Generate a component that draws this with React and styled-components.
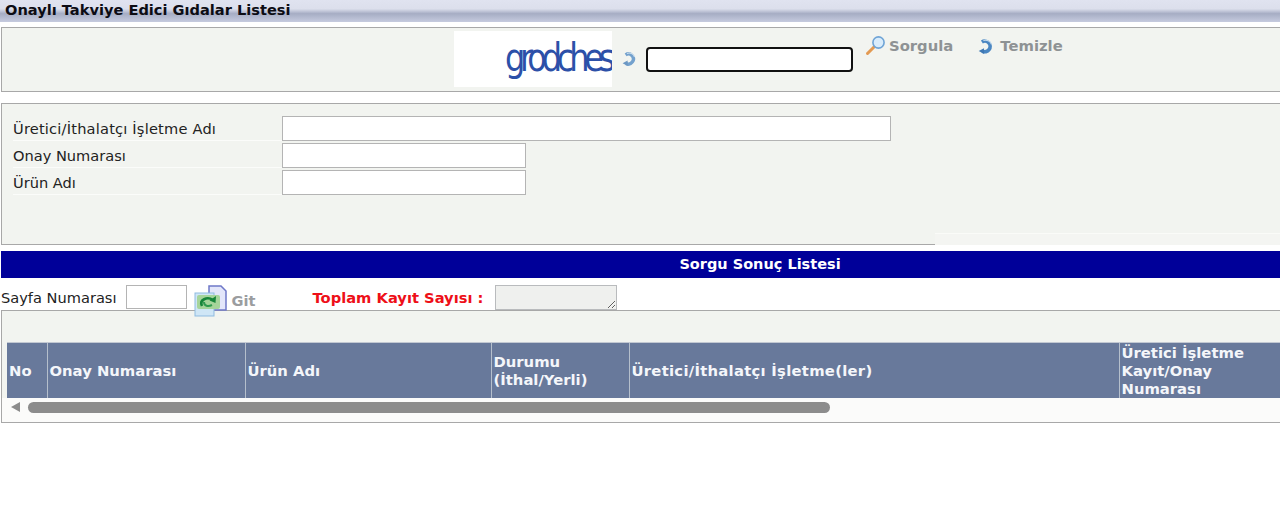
import React from "react";
import styled, { createGlobalStyle } from "styled-components";

const GlobalStyle = createGlobalStyle`
  html, body {
    margin: 0;
    padding: 0;
    background: #fff;
    overflow: hidden;
  }
  body {
    font-family: "DejaVu Sans", Verdana, sans-serif;
    font-size: 13px;
    color: #222;
  }
`;

const Page = styled.div`
  width: 1280px;
  height: 515px;
  overflow: hidden;
`;

const TitleBar = styled.div`
  height: 22px;
  box-sizing: border-box;
  padding: 2px 0 0 5px;
  font-size: 14.6px;
  font-weight: bold;
  line-height: 16px;
  color: #0c0c14;
  background: linear-gradient(#e0e3f0 0%, #dcdfec 40%, #a6adc4 62%, #c6cbdf 100%);
`;

const Panel = styled.div`
  box-sizing: border-box;
  width: 1282px;
  height: ${(p) => p.$height}px;
  margin: ${(p) => p.$top}px 0 0 1px;
  background: #f2f4f0;
  border: 1px solid #a8a8a8;
`;

const SearchRow = styled.div`
  display: flex;
  align-items: flex-start;
  padding: 3px 0 0 452px;
`;

const Captcha = styled.div`
  width: 158px;
  height: 56px;
  box-sizing: border-box;
  padding: 9px 0 0 51px;
  background: #fff;
  overflow: hidden;
`;

const CaptchaWord = styled.span`
  display: inline-block;
  color: #2c50a8;
  font-family: "DejaVu Sans", sans-serif;
  font-size: 32px;
  line-height: 36px;
  letter-spacing: -5.2px;
  white-space: nowrap;
  transform: scaleY(1.2);
`;

const RefreshSmall = styled.span`
  display: block;
  width: 16px;
  height: 16px;
  margin: 20px 0 0 9px;
  opacity: 0.75;
`;

const CaptchaInput = styled.input`
  box-sizing: border-box;
  width: 207px;
  height: 25px;
  margin: 16px 0 0 9px;
  border: 2px solid #111;
  border-radius: 4px;
  background: #fff;
  outline: none;
`;

const ActionLink = styled.a`
  display: flex;
  align-items: center;
  gap: ${(p) => p.$gap}px;
  margin: ${(p) => p.$mt}px 0 0 ${(p) => p.$ml}px;
  font-size: 14.8px;
  font-weight: bold;
  line-height: 20px;
  color: #8e9294;
`;

const FormBody = styled.div`
  display: grid;
  grid-template-columns: 269px auto;
  justify-content: start;
  row-gap: 2px;
  padding: 12px 0 0 11px;
`;

const FormLabel = styled.label`
  display: flex;
  align-items: center;
  height: 25px;
  border-bottom: 1px solid #fbfcfa;
  box-sizing: border-box;
  font-size: 14.6px;
  letter-spacing: ${(p) => p.$spacing || 0}px;
  color: #222;
`;

const TextInput = styled.input`
  display: block;
  box-sizing: border-box;
  width: ${(p) => p.$width}px;
  height: 25px;
  padding: 0 3px;
  border: 1px solid #b4b4b4;
  background: #fff;
  outline: none;
`;

const FormFooter = styled.div`
  width: 345px;
  height: 11px;
  margin: 38px 2px 0 auto;
  border-top: 1px solid #fafbf8;
  background: #f4f5f2;
`;

const BlueBar = styled.div`
  height: 27px;
  margin: 6px 0 0 1px;
  background: #000099;
  color: #fff;
  font-size: 14.5px;
  font-weight: bold;
  line-height: 27px;
  text-align: center;
  padding-left: 239px;
`;

const PagerRow = styled.div`
  display: flex;
  align-items: flex-start;
  height: 32px;
  padding-left: 1px;
  position: relative;
  z-index: 1;
`;

const PagerLabel = styled.span`
  margin-top: 11px;
  font-size: 14.6px;
  line-height: 17px;
  color: #222;
`;

const PageInput = styled.input`
  box-sizing: border-box;
  width: 61px;
  height: 24px;
  margin: 7px 0 0 9px;
  border: 1px solid #b4b4b4;
  background: #fff;
  outline: none;
`;

const GoIcon = styled.span`
  display: block;
  width: 34px;
  height: 32px;
  margin: 7px 0 0 7px;
`;

const GoText = styled.span`
  margin: 14px 0 0 4px;
  font-size: 14.6px;
  font-weight: bold;
  line-height: 17px;
  color: #9b9d9f;
`;

const TotalLabel = styled.span`
  margin: 11px 0 0 57px;
  font-size: 14.7px;
  font-weight: bold;
  line-height: 17px;
  color: #ee0f18;
`;

const TotalBox = styled.textarea`
  box-sizing: border-box;
  width: 122px;
  height: 25px;
  margin: 7px 0 0 11px;
  padding: 0;
  border: 1px solid #b9bbbd;
  background: #eff0ee;
  outline: none;
`;

const TableWrap = styled.div`
  padding-top: 31px;
  overflow: hidden;
`;

const Table = styled.table`
  width: 1400px;
  margin-left: 5px;
  table-layout: fixed;
  border-collapse: collapse;
`;

const HeadCell = styled.th`
  box-sizing: border-box;
  width: ${(p) => p.$width}px;
  height: 55px;
  padding: 0 2px;
  background: #68799b;
  border-left: 1px solid #b5bfcc;
  border-top: 1px solid #c2c8d2;
  color: #f4f6fa;
  font-size: 14.8px;
  font-weight: bold;
  line-height: 18px;
  letter-spacing: ${(p) => p.$spacing || 0}px;
  text-align: left;
  &:first-child {
    border-left: 0;
  }
`;

const HeadText = styled.span`
  display: block;
  margin: 1px 0 -1px;
`;

const ScrollTrack = styled.div`
  display: flex;
  align-items: flex-start;
  height: 24px;
  box-sizing: border-box;
  padding: 4px 0 0 9px;
  background: #fbfbfa;
`;

const ScrollArrow = styled.span`
  width: 0;
  height: 0;
  border-top: 5px solid transparent;
  border-bottom: 5px solid transparent;
  border-right: 9px solid #8c8c8c;
`;

const ScrollThumb = styled.span`
  width: 802px;
  height: 11px;
  margin-left: 8px;
  border-radius: 6px;
  background: #8c8c8c;
`;

const RefreshGlyph = ({ size }) => (
  <svg width={size} height={size} viewBox="0 0 16 16">
    <path d="M4.6 3.8 A5 5 0 1 1 5 12.4" fill="none" stroke="#4a86c2" strokeWidth="3.4" />
    <path d="M1.6 12.2 L6.6 9.6 L6.8 15 Z" fill="#3f78b4" />
    <path d="M6 2.4 A5.8 5.8 0 0 1 13.6 6" fill="none" stroke="#c3d9ec" strokeWidth="1.1" />
  </svg>
);

const SearchGlyph = () => (
  <svg width="21" height="21" viewBox="0 0 21 21">
    <path d="M2.5 18.5 L9 12" stroke="#e39a52" strokeWidth="3" strokeLinecap="round" />
    <circle cx="13.5" cy="7.5" r="5.6" fill="#d9ecfb" stroke="#6fa4d6" strokeWidth="1.6" />
  </svg>
);

const GoGlyph = () => (
  <svg width="34" height="32" viewBox="0 0 34 32">
    <path d="M15 1 H27 L32 6 V25 H15 Z" fill="#e3e6fa" stroke="#6f78c8" strokeWidth="1.5" />
    <rect x="1" y="8" width="19" height="23" fill="#cfe6f6" stroke="#8fbbe0" />
    <rect x="3" y="10" width="23" height="14" rx="2" fill="#a5d49a" />
    <path d="M8 21 C5 15 13 11 19 15" stroke="#16853a" strokeWidth="2.6" fill="none" />
    <path d="M22 11 L21.5 18 L15.5 15.5 Z" fill="#16853a" />
    <path d="M10 17 C10 21 14 22 18 20" stroke="#2f9a4f" strokeWidth="2" fill="none" />
  </svg>
);

const columns = [
  { width: 40, label: "No" },
  { width: 198, label: "Onay Numarası" },
  { width: 246, label: "Ürün Adı" },
  { width: 138, label: <>Durumu<br />(İthal/Yerli)</> },
  { width: 490, label: "Üretici/İthalatçı İşletme(ler)", spacing: 0.27 },
  { width: 288, label: <>Üretici İşletme<br />Kayıt/Onay<br />Numarası</> },
];

export default function App() {
  return (
    <Page>
      <GlobalStyle />
      <TitleBar>Onaylı Takviye Edici Gıdalar Listesi</TitleBar>

      <Panel $height={65} $top={5}>
        <SearchRow>
          <Captcha><CaptchaWord>grodches</CaptchaWord></Captcha>
          <RefreshSmall><RefreshGlyph size={16} /></RefreshSmall>
          <CaptchaInput />
          <ActionLink $gap={3} $mt={4} $ml={12}><SearchGlyph />Sorgula</ActionLink>
          <ActionLink $gap={6} $mt={5} $ml={24}><RefreshGlyph size={17} />Temizle</ActionLink>
        </SearchRow>
      </Panel>

      <Panel $height={142} $top={11}>
        <FormBody>
          <FormLabel $spacing={0.2}>Üretici/İthalatçı İşletme Adı</FormLabel>
          <TextInput $width={609} />
          <FormLabel>Onay Numarası</FormLabel>
          <TextInput $width={244} />
          <FormLabel>Ürün Adı</FormLabel>
          <TextInput $width={244} />
        </FormBody>
        <FormFooter />
      </Panel>

      <BlueBar>Sorgu Sonuç Listesi</BlueBar>

      <PagerRow>
        <PagerLabel>Sayfa Numarası</PagerLabel>
        <PageInput />
        <GoIcon><GoGlyph /></GoIcon>
        <GoText>Git</GoText>
        <TotalLabel>Toplam Kayıt Sayısı :</TotalLabel>
        <TotalBox readOnly />
      </PagerRow>

      <Panel $height={113} $top={0}>
        <TableWrap>
          <Table>
            <thead>
              <tr>
                {columns.map((col, i) => (
                  <HeadCell key={i} $width={col.width} $spacing={col.spacing}>
                    <HeadText>{col.label}</HeadText>
                  </HeadCell>
                ))}
              </tr>
            </thead>
          </Table>
          <ScrollTrack>
            <ScrollArrow />
            <ScrollThumb />
          </ScrollTrack>
        </TableWrap>
      </Panel>
    </Page>
  );
}
